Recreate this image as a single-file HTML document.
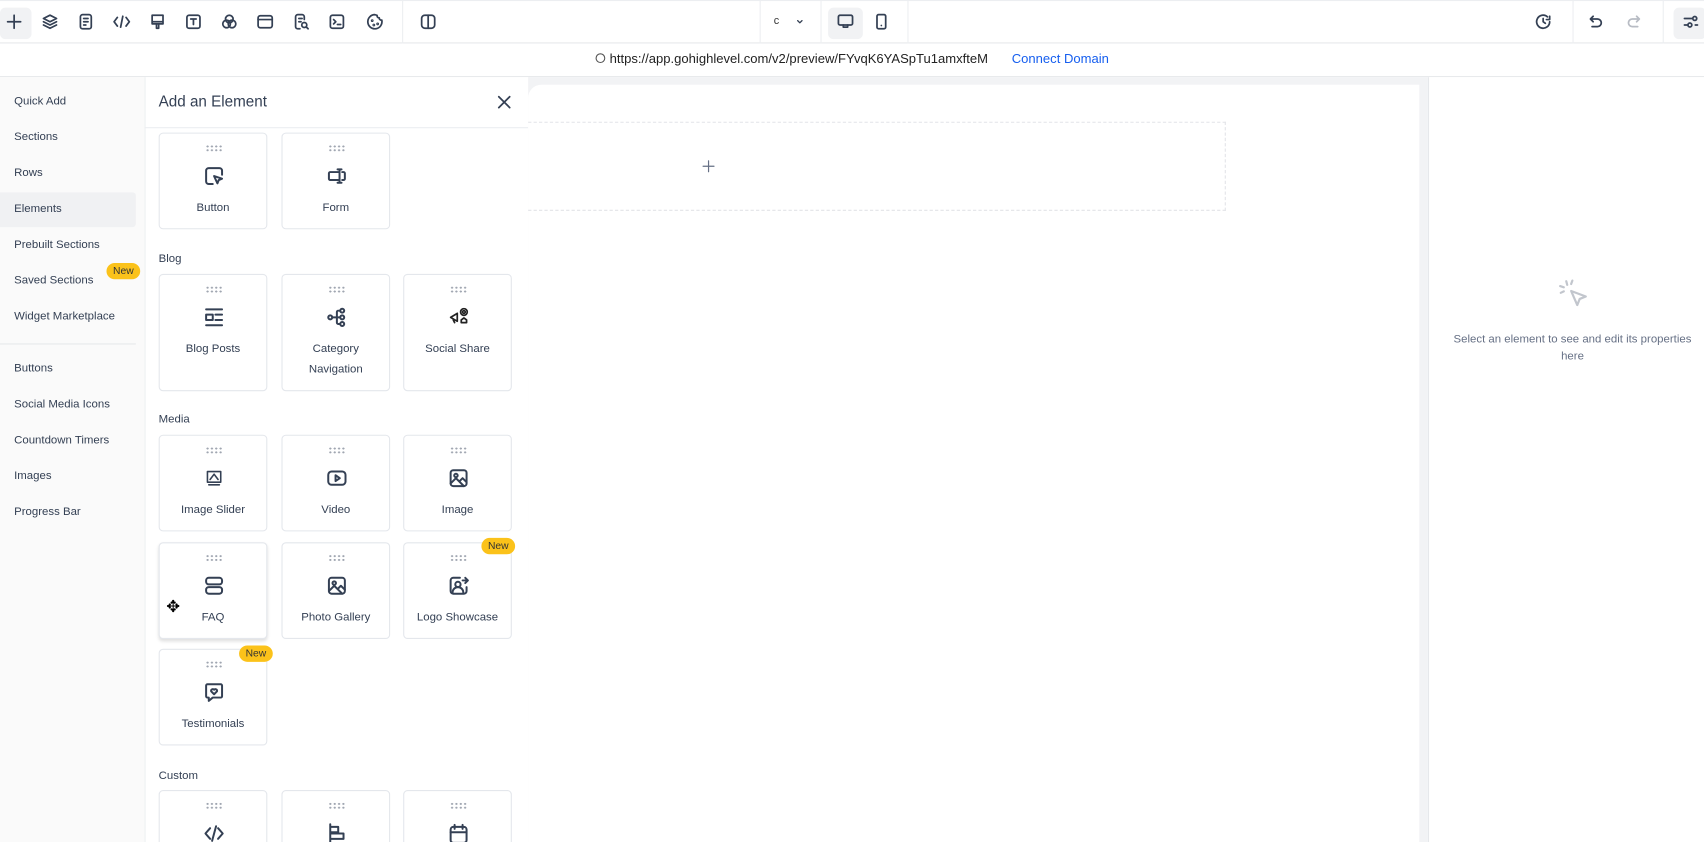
<!DOCTYPE html>
<html><head><meta charset="utf-8"><style>
*{box-sizing:border-box;margin:0;padding:0}
html,body{width:1704px;height:842px;overflow:hidden;background:#fff}
#w{position:absolute;left:0;top:0;width:1568px;height:775px;overflow:hidden;transform:scale(1.08673);transform-origin:0 0;font-family:"Liberation Sans",Arial,sans-serif;color:#344054}
.a{position:absolute}
svg{fill:none;stroke:#344054;stroke-width:1.6;stroke-linecap:round;stroke-linejoin:round}
.ti{position:absolute;top:11px;width:18px;height:18px}
.vl{position:absolute;top:0;height:40px;width:1px;background:#eceef1}
.nav{position:absolute;left:13px;font-size:10.5px;color:#344054}
.card{position:absolute;width:100px;border:1px solid #e4e7ec;border-radius:4px;background:#fff;text-align:center;font-size:10.5px;color:#344054}
.card .d{position:absolute;left:42px;top:10px;width:16px;height:7px;background-image:radial-gradient(circle,#a0a6b1 0.9px,transparent 1.1px);background-size:4px 3.5px}
.card svg{position:absolute;left:39px;top:28px;width:22px;height:22px;stroke-width:1.5}
.card .t{position:absolute;left:0;right:0;top:59px;line-height:19px}
.lab{position:absolute;left:146px;font-size:10.5px;color:#344054}
.new{position:absolute;background:#fbc21a;border-radius:8px;font-size:9.5px;color:#333;padding:2px 6px;line-height:11px}
</style></head><body><div id="w">
<div class="a" style="left:0;top:0;width:1568px;height:40px;border-top:1px solid #eceef1;border-bottom:1px solid #e6e8eb"></div>
<div class="a" style="left:0;top:7px;width:29px;height:29px;background:#f1f2f4;border-radius:5px"></div>
<svg class="ti" style="left:4px" viewBox="0 0 18 18"><path d="M9 3v12M3 9h12"/></svg>
<svg class="ti" style="left:37px" viewBox="0 0 18 18"><path d="M9 3l6 3-6 3-6-3zM3 9l6 3 6-3M3 12l6 3 6-3"/></svg>
<svg class="ti" style="left:70px" viewBox="0 0 18 18"><rect x="4" y="2.5" width="10" height="13" rx="2"/><path d="M7 6h4M7 9h4M7 12h2"/></svg>
<svg class="ti" style="left:103px" viewBox="0 0 18 18"><path d="M5 5l-3 4 3 4M13 5l3 4-3 4M10 4l-2 10"/></svg>
<svg class="ti" style="left:136px" viewBox="0 0 18 18"><path d="M4 3h10v6H4zM4 9v2h10V9M8 11v4h2v-4"/></svg>
<svg class="ti" style="left:169px" viewBox="0 0 18 18"><rect x="3" y="3" width="12" height="12" rx="2"/><path d="M6.5 6.5h5M9 6.5v5"/></svg>
<svg class="ti" style="left:202px" viewBox="0 0 18 18"><circle cx="9" cy="6.5" r="3.5"/><circle cx="6.5" cy="11" r="3.5"/><circle cx="11.5" cy="11" r="3.5"/></svg>
<svg class="ti" style="left:235px" viewBox="0 0 18 18"><rect x="2.5" y="3.5" width="13" height="11" rx="2"/><path d="M2.5 7h13"/></svg>
<svg class="ti" style="left:268px" viewBox="0 0 18 18"><path d="M12 7V4.5a2 2 0 00-2-2H6a2 2 0 00-2 2v9a2 2 0 002 2h2M7 6h3M7 9h2"/><circle cx="12" cy="12" r="2.3"/><path d="M13.8 13.8L15.5 15.5"/></svg>
<svg class="ti" style="left:301px" viewBox="0 0 18 18"><rect x="3" y="3" width="12" height="12" rx="2"/><path d="M6 7l2 2-2 2M9.5 11.5h3"/></svg>
<svg class="ti" style="left:336px" viewBox="0 0 18 18"><path d="M9 2.5a6.5 6.5 0 106.3 5 2 2 0 01-2.3-2 2 2 0 01-2-2.3A6.5 6.5 0 009 2.5z"/><circle cx="6.5" cy="8" r=".5"/><circle cx="8" cy="12" r=".5"/><circle cx="11.5" cy="11" r=".5"/></svg>
<div class="vl" style="left:370px"></div>
<svg class="ti" style="left:385px" viewBox="0 0 18 18"><rect x="3" y="3" width="12" height="12" rx="3"/><path d="M9 3v12"/></svg>
<div class="vl" style="left:699px"></div>
<div class="a" style="left:712px;top:14px;font-size:10px;color:#333">c</div>
<svg class="a" style="left:731px;top:15px;width:10px;height:10px;stroke-width:1.2" viewBox="0 0 10 10"><path d="M3 4l2 2 2-2"/></svg>
<div class="vl" style="left:755px"></div>
<div class="a" style="left:762px;top:7px;width:32px;height:29px;background:#f1f2f4;border-radius:5px"></div>
<svg class="ti" style="left:769px" viewBox="0 0 18 18"><rect x="2.5" y="3" width="13" height="9" rx="1.5"/><path d="M7 12v2h4v-2"/></svg>
<svg class="ti" style="left:802px" viewBox="0 0 18 18"><rect x="5" y="2.5" width="8" height="13" rx="1.5"/><path d="M9 12.5h.01"/></svg>
<div class="vl" style="left:835px"></div>
<svg class="ti" style="left:1411px" viewBox="0 0 18 18"><path d="M15 9a6 6 0 11-2-4.5M15 4v3h-3M9 6v3l2 1.5"/></svg>
<div class="vl" style="left:1447px"></div>
<svg class="ti" style="left:1460px" viewBox="0 0 18 18"><path d="M6 4L3.5 6.5 6 9M4 6.5h6a3.5 3.5 0 010 7H5"/></svg>
<svg class="ti" style="left:1494px;stroke:#b8bcc4" viewBox="0 0 18 18"><path d="M12 4l2.5 2.5L12 9M14 6.5H8a3.5 3.5 0 000 7h5"/></svg>
<div class="vl" style="left:1530px"></div>
<div class="a" style="left:1540px;top:7px;width:30px;height:29px;background:#f1f2f4;border-radius:5px"></div>
<svg class="ti" style="left:1547px" viewBox="0 0 18 18"><path d="M3 6h7M3 12h3M13 12h2"/><circle cx="12.5" cy="6" r="1.8"/><circle cx="8" cy="12" r="1.8"/></svg>
<div class="a" style="left:0;top:70px;width:1568px;height:1px;background:#e6e8eb"></div>
<div class="a" style="left:548px;top:49px;width:9px;height:9px;border:1px solid #555;border-radius:50%"></div>
<div class="a" style="left:561px;top:47px;font-size:12px;color:#222">https://app.gohighlevel.com/v2/preview/FYvqK6YASpTu1amxfteM</div>
<div class="a" style="left:931px;top:47px;font-size:12px;color:#155eef">Connect Domain</div>
<div class="a" style="left:0;top:71px;width:133px;height:704px;background:#fafafa"></div>
<div class="a" style="left:0;top:177px;width:125px;height:32px;background:#f0f1f3;border-radius:0 3px 3px 0"></div>
<div class="nav" style="top:87px">Quick Add</div>
<div class="nav" style="top:120px">Sections</div>
<div class="nav" style="top:153px">Rows</div>
<div class="nav" style="top:186px">Elements</div>
<div class="nav" style="top:219px">Prebuilt Sections</div>
<div class="nav" style="top:252px">Saved Sections</div>
<div class="new" style="left:98px;top:242px">New</div>
<div class="nav" style="top:285px">Widget Marketplace</div>
<div class="a" style="left:0;top:316px;width:125px;height:1px;background:#e6e8eb"></div>
<div class="nav" style="top:333px">Buttons</div>
<div class="nav" style="top:366px">Social Media Icons</div>
<div class="nav" style="top:399px">Countdown Timers</div>
<div class="nav" style="top:432px">Images</div>
<div class="nav" style="top:465px">Progress Bar</div>
<div class="a" style="left:133px;top:71px;width:353px;height:704px;background:#fff;border-left:1px solid #eef0f2"></div>
<div class="a" style="left:146px;top:85px;font-size:14px;color:#344054">Add an Element</div>
<svg class="a" style="left:457px;top:87px;width:14px;height:14px" viewBox="0 0 14 14"><path d="M2 2l10 10M12 2L2 12"/></svg>
<div class="a" style="left:133px;top:117px;width:353px;height:1px;background:#eceef1"></div>

<div class="card" style="left:146px;top:122px;height:89px"><div class="d"></div><svg viewBox="0 0 18 18"><path d="M8 15H5a2 2 0 01-2-2V5a2 2 0 012-2h8a2 2 0 012 2v3"/><path d="M9 9l6 2-2.5 1-1 2.5z"/></svg><div class="t">Button</div></div>
<div class="card" style="left:259px;top:122px;height:89px"><div class="d"></div><svg viewBox="0 0 18 18"><path d="M10 6H4a1 1 0 00-1 1v4a1 1 0 001 1h6M11 4v10M9.5 4h3M9.5 14h3M13 6h1a1 1 0 011 1v4a1 1 0 01-1 1h-1"/></svg><div class="t">Form</div></div>
<div class="lab" style="top:232px">Blog</div>
<div class="card" style="left:146px;top:252px;height:108px"><div class="d"></div><svg viewBox="0 0 18 18"><path d="M3 3h12M3 15h12M10 7h5M10 11h5"/><rect x="3" y="7" width="5" height="4"/></svg><div class="t">Blog Posts</div></div>
<div class="card" style="left:259px;top:252px;height:108px"><div class="d"></div><svg viewBox="0 0 18 18"><circle cx="4" cy="9" r="1.5"/><circle cx="13" cy="4" r="1.5"/><circle cx="13" cy="9" r="1.5"/><circle cx="13" cy="14" r="1.5"/><path d="M5.5 9h6M9 9V5a1 1 0 011-1h1.5M9 9v4a1 1 0 001 1h1.5"/></svg><div class="t">Category<br>Navigation</div></div>
<div class="card" style="left:371px;top:252px;height:108px"><div class="d"></div><svg viewBox="0 0 18 18" style="stroke:#222;stroke-width:1.3"><path d="M3 9l5-3v6zM5 11l1 2"/><circle cx="13" cy="5" r="2.5"/><circle cx="13" cy="5" r="1"/><path d="M11 13h4v-2l-2-1.5-2 1.5z"/></svg><div class="t">Social Share</div></div>
<div class="lab" style="top:380px">Media</div>
<div class="card" style="left:146px;top:400px;height:89px"><div class="d"></div><svg viewBox="0 0 18 18" style="stroke-width:1.2"><rect x="4" y="4" width="10" height="8"/><path d="M6 10l3-4 3 4M5 14h8"/></svg><div class="t">Image Slider</div></div>
<div class="card" style="left:259px;top:400px;height:89px"><div class="d"></div><svg viewBox="0 0 18 18"><rect x="2.5" y="4" width="13" height="10" rx="2.5"/><path d="M8 6.8v4.4L11.2 9z"/></svg><div class="t">Video</div></div>
<div class="card" style="left:371px;top:400px;height:89px"><div class="d"></div><svg viewBox="0 0 18 18"><rect x="3" y="3" width="12" height="12" rx="2"/><circle cx="7" cy="7" r="1.3"/><path d="M3 13l4-4 6 6M10 11l2-2 3 3"/></svg><div class="t">Image</div></div>
<div class="card" style="left:146px;top:499px;height:89px;box-shadow:0 2px 3px rgba(0,0,0,.12)"><div class="d"></div><svg viewBox="0 0 18 18"><rect x="3" y="3" width="12" height="5" rx="2"/><rect x="3" y="10" width="12" height="5" rx="2"/></svg><div class="t">FAQ</div></div>
<div class="a" style="left:153px;top:551px;font-size:15px;color:#000;line-height:15px">✥</div>
<div class="card" style="left:259px;top:499px;height:89px"><div class="d"></div><svg viewBox="0 0 18 18"><rect x="3" y="3" width="12" height="12" rx="2"/><circle cx="7" cy="7" r="1.3"/><path d="M3 13l4-4 6 6M10 11l2-2 3 3"/></svg><div class="t">Photo Gallery</div></div>
<div class="card" style="left:371px;top:499px;height:89px"><div class="d"></div><svg viewBox="0 0 18 18"><path d="M10 3H5a2 2 0 00-2 2v8a2 2 0 002 2h8a2 2 0 002-2v-3"/><circle cx="8.5" cy="8" r="2"/><path d="M4.5 14a4 4 0 018 0M12 5h4M14 3l2 2-2 2"/></svg><div class="t">Logo Showcase</div></div>
<div class="new" style="left:443px;top:495px">New</div>
<div class="card" style="left:146px;top:597px;height:89px"><div class="d"></div><svg viewBox="0 0 18 18"><path d="M4 3h10a1 1 0 011 1v8a1 1 0 01-1 1H8l-3 2.5V13H4a1 1 0 01-1-1V4a1 1 0 011-1z"/><path d="M9 10.5L6.8 8.3a1.3 1.3 0 012.2-1.2 1.3 1.3 0 012.2 1.2z"/></svg><div class="t">Testimonials</div></div>
<div class="new" style="left:220px;top:594px">New</div>
<div class="lab" style="top:708px">Custom</div>
<div class="card" style="left:146px;top:727px;height:60px"><div class="d"></div><svg viewBox="0 0 18 18"><path d="M6 5l-3.5 4L6 13M12 5l3.5 4-3.5 4M10.5 3.5l-3 11"/></svg></div>
<div class="card" style="left:259px;top:727px;height:60px"><div class="d"></div><svg viewBox="0 0 18 18"><path d="M4 2v15M4 4h6v4H4M4 9h10v4H4"/></svg></div>
<div class="card" style="left:371px;top:727px;height:60px"><div class="d"></div><svg viewBox="0 0 18 18"><rect x="3" y="4" width="12" height="12" rx="2"/><path d="M3 8h12M6 2.5v3M12 2.5v3"/></svg></div>
<div class="a" style="left:486px;top:71px;width:828px;height:704px;background:#f2f3f5"></div>
<div class="a" style="left:486px;top:78px;width:820px;height:697px;background:#fff;border-radius:12px 0 0 0"></div>
<div class="a" style="left:486px;top:112px;width:642px;height:82px;border-top:1px dashed #e2e4e8;border-bottom:1px dashed #e2e4e8;border-right:1px dashed #e2e4e8"></div>
<svg class="a" style="left:646px;top:147px;width:12px;height:12px;stroke:#667085;stroke-width:1.1" viewBox="0 0 12 12"><path d="M6 1v10M1 6h10"/></svg>
<div class="a" style="left:1314px;top:71px;width:254px;height:704px;background:#fff;border-left:1px solid #e6e8eb"></div>
<svg class="a" style="left:1430px;top:252px;width:36px;height:36px;stroke:#c2c6cd;stroke-width:1.8" viewBox="0 0 32 32"><path d="M14 14l12 4.5-5 2-2 5z"/><path d="M10 6l.8 3M5 10l3 1M5.5 15.5l2.5-1.2M15 5.5l-1 2.8"/></svg>
<div class="a" style="left:1326px;top:305px;width:242px;text-align:center;font-size:10.5px;line-height:15.5px;color:#667085">Select an element to see and edit its properties here</div>
</div></body></html>
